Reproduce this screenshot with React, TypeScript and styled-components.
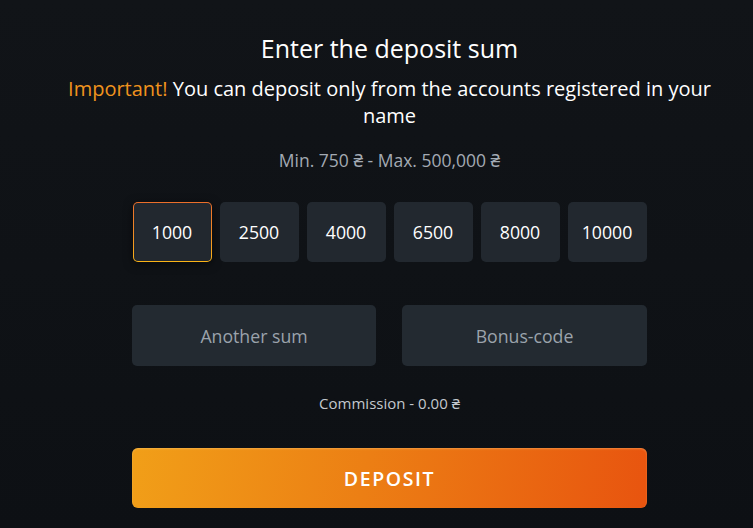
import React, { useState } from "react";
import styled, { createGlobalStyle } from "styled-components";

const Global = createGlobalStyle`
  html, body { margin: 0; padding: 0; background: #0f1216; }
  body { font-family: "Open Sans", "Noto Sans", sans-serif; color: #fff; }
  * { box-sizing: border-box; }
`;

const Page = styled.div`
  width: 753px;
  height: 528px;
  background: linear-gradient(180deg, #111418 0%, #0d1014 100%);
  padding: 32px 0 0 26px;
  display: flex;
  flex-direction: column;
  align-items: center;
`;

const Title = styled.h1`
  margin: 0;
  font-size: 25px;
  font-weight: 400;
  line-height: 32px;
  text-align: center;
`;

const Notice = styled.p`
  margin: 11px 0 0;
  width: 660px;
  font-size: 20px;
  line-height: 27px;
  text-align: center;
`;

const Accent = styled.span`
  color: #f0931e;
`;

const Limits = styled.div`
  margin-top: 19px;
  font-size: 17.5px;
  line-height: 24px;
  color: #a3aab3;
`;

const Amounts = styled.div`
  margin-top: 30px;
  display: grid;
  grid-template-columns: repeat(6, 79px);
  gap: 8px;
`;

const Amount = styled.button<{ $active?: boolean }>`
  height: 60px;
  border-radius: 5px;
  font-family: inherit;
  font-size: 17.7px;
  color: #fff;
  cursor: pointer;
  border: 1px solid transparent;
  background: ${(p) =>
    p.$active
      ? "linear-gradient(#22282f, #22282f) padding-box, linear-gradient(180deg, #ec6e2a 0%, #f08a26 50%, #fbb417 100%) border-box"
      : "#22282f"};
  box-shadow: ${(p) => (p.$active ? "0 2px 10px rgba(0,0,0,0.5)" : "none")};
`;

const Inputs = styled.div`
  margin-top: 43px;
  display: grid;
  grid-template-columns: 244px 245px;
  gap: 26px;
`;

const Field = styled.input`
  height: 61px;
  border: none;
  border-radius: 5px;
  background: #232a31;
  font-family: inherit;
  font-size: 17.7px;
  text-align: center;
  color: #fff;
  outline: none;
  &::placeholder { color: #9ba3ac; }
`;

const Commission = styled.div`
  margin-top: 27px;
  font-size: 15px;
  line-height: 20px;
  color: #c3c8ce;
`;

const Deposit = styled.button`
  margin-top: 35px;
  width: 515px;
  height: 60px;
  border: none;
  border-radius: 6px;
  background: linear-gradient(100deg, #f19f18 0%, #ec7f14 45%, #e8540f 100%);
  box-shadow: inset 0 1px 2px rgba(255, 220, 150, 0.35);
  font-family: inherit;
  font-size: 19.5px;
  font-weight: 600;
  letter-spacing: 1.6px;
  color: #fff;
  cursor: pointer;
`;

const values = [1000, 2500, 4000, 6500, 8000, 10000];

export default function App() {
  const [active, setActive] = useState(1000);
  return (
    <Page>
      <Global />
      <Title>Enter the deposit sum</Title>
      <Notice>
        <Accent>Important!</Accent> You can deposit only from the accounts registered in your name
      </Notice>
      <Limits>Min. 750 ₴ - Max. 500,000 ₴</Limits>
      <Amounts>
        {values.map((v) => (
          <Amount key={v} $active={v === active} onClick={() => setActive(v)}>
            {v}
          </Amount>
        ))}
      </Amounts>
      <Inputs>
        <Field placeholder="Another sum" />
        <Field placeholder="Bonus-code" />
      </Inputs>
      <Commission>Commission - 0.00 ₴</Commission>
      <Deposit>DEPOSIT</Deposit>
    </Page>
  );
}
